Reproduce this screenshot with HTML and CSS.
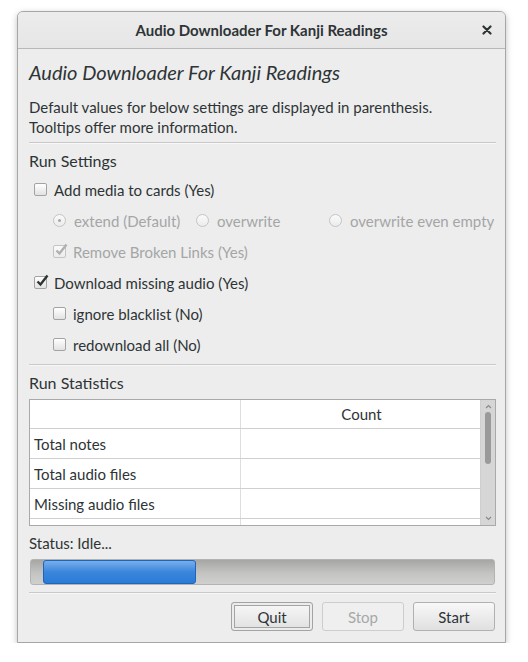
FILE: index.html
```html
<!DOCTYPE html>
<html>
<head>
<meta charset="utf-8">
<link rel="stylesheet" href="styles.css">
</head>
<body>
<div class="window">
  <div class="titlebar">
    <span class="title">Audio Downloader For Kanji Readings</span>
    <span class="close"><svg width="10" height="10" viewBox="0 0 10 10"><path d="M1.5 1.5 L8.5 8.5 M8.5 1.5 L1.5 8.5" stroke="#2e3436" stroke-width="2.2" stroke-linecap="round"/></svg></span>
  </div>
  <div class="content">
    <div class="heading">Audio Downloader For Kanji Readings</div>
    <div class="desc">Default values for below settings are displayed in parenthesis.<br>Tooltips offer more information.</div>
    <div class="sep sep-a"></div>
    <div class="section section-a">Run Settings</div>
    <div class="row"><span class="cb"></span><span>Add media to cards (Yes)</span></div>
    <div class="row indent disabled radios">
      <span class="opt opt1"><span class="radio on"></span><span>extend (Default)</span></span>
      <span class="opt opt2"><span class="radio"></span><span>overwrite</span></span>
      <span class="opt"><span class="radio"></span><span>overwrite even empty</span></span>
    </div>
    <div class="row indent disabled"><span class="cb checked plain"><svg width="16" height="16" viewBox="0 0 16 16"><path d="M3.5 8.5 L6.5 11.5 L13.5 2.5" fill="none" stroke="#b0b0b0" stroke-width="2.4"/></svg></span><span>Remove Broken Links (Yes)</span></div>
    <div class="row"><span class="cb checked"><svg width="16" height="16" viewBox="0 0 16 16"><path d="M3.5 8.5 L6.5 11.5 L13.5 2.5" fill="none" stroke="#2e3436" stroke-width="2.4"/></svg></span><span>Download missing audio (Yes)</span></div>
    <div class="row indent"><span class="cb"></span><span>ignore blacklist (No)</span></div>
    <div class="row indent"><span class="cb"></span><span>redownload all (No)</span></div>
    <div class="sep sep-b"></div>
    <div class="section section-b">Run Statistics</div>
    <div class="table">
      <div class="grid">
        <div class="tr head"><div class="c1"></div><div class="c2">Count</div></div>
        <div class="tr"><div class="c1">Total notes</div><div class="c2"></div></div>
        <div class="tr"><div class="c1">Total audio files</div><div class="c2"></div></div>
        <div class="tr"><div class="c1">Missing audio files</div><div class="c2"></div></div>
        <div class="tr last"><div class="c1"></div><div class="c2"></div></div>
      </div>
      <div class="scrollbar">
        <svg class="arrow" width="7" height="5" viewBox="0 0 7 5"><path d="M1 4 L3.5 1.5 L6 4" fill="none" stroke="#8a8a8a" stroke-width="1.2"/></svg>
        <div class="slider"></div>
        <div class="fill"></div>
        <svg class="arrow" width="7" height="5" viewBox="0 0 7 5"><path d="M1 1 L3.5 3.5 L6 1" fill="none" stroke="#8a8a8a" stroke-width="1.2"/></svg>
      </div>
    </div>
    <div class="status">Status: Idle...</div>
    <div class="progress"><div class="bar"></div></div>
    <div class="sep sep-c"></div>
    <div class="buttons">
      <button class="btn focus">Quit</button>
      <button class="btn off">Stop</button>
      <button class="btn">Start</button>
    </div>
  </div>
</div>
</body>
</html>
```

FILE: styles.css
```css
html, body {
  margin: 0;
  padding: 0;
  background: #ffffff;
}
body {
  font-family: "Lato", "Open Sans", sans-serif;
  font-size: 15px;
  color: #2e3436;
}
.window {
  margin: 11px 0 0 17px;
  width: 489px;
  height: 632px;
  box-sizing: border-box;
  border: 1px solid #a6a6a6;
  border-radius: 6px 6px 0 0;
  background: #ededed;
  box-shadow: 0 2px 6px rgba(0,0,0,0.25);
  display: flex;
  flex-direction: column;
  overflow: hidden;
}
.titlebar {
  height: 36px;
  border-bottom: 1px solid #b8b8b8;
  background: linear-gradient(#ececec, #e6e6e6);
  position: relative;
  display: flex;
  align-items: center;
  justify-content: center;
}
.title {
  font-weight: bold;
  font-size: 15px;
  color: #2e3436;
}
.close {
  position: absolute;
  right: 13px;
  top: 13px;
  width: 10px;
  height: 10px;
  display: flex;
}
.content {
  flex: 1;
  padding: 0 9px 0 11px;
  display: flex;
  flex-direction: column;
}
.heading {
  font-style: italic;
  font-size: 20px;
  height: 24px;
  line-height: 24px;
  margin-top: 11px;
}
.desc {
  margin-top: 13px;
  line-height: 20px;
}
.sep {
  height: 1px;
  background: #c9c9c9;
  border-bottom: 1px solid #f8f8f8;
}
.sep-a { margin-top: 5px; }
.section {
  font-size: 16px;
  height: 22px;
  line-height: 22px;
}
.section-a { margin-top: 6px; margin-bottom: 2px; }
.section-b { margin-top: 6px; }
.row {
  height: 31px;
  display: flex;
  align-items: center;
  gap: 7px;
  padding-left: 5px;
}
.row.indent { padding-left: 24px; }
.row.disabled { color: #a4a6a6; }
.radios { padding-left: 23px; gap: 0; }
.opt { display: flex; align-items: center; gap: 8px; }
.opt1 { width: 143px; }
.opt2 { width: 133px; }
.cb {
  width: 11px;
  height: 11px;
  border: 1px solid #a3a3a3;
  border-radius: 2px;
  background: linear-gradient(#ffffff, #e2e2e2);
  position: relative;
  flex: none;
}
.cb.checked svg {
  position: absolute;
  left: -1px;
  top: -4px;
}
.cb.plain {
  border-color: #c4c4c4;
  background: linear-gradient(#fafafa, #ececec);
}
.radio {
  width: 11px;
  height: 11px;
  border: 1px solid #c4c4c4;
  border-radius: 50%;
  background: linear-gradient(#fafafa, #ececec);
  position: relative;
  flex: none;
}
.radio.on::after {
  content: "";
  position: absolute;
  left: 4px;
  top: 4px;
  width: 3px;
  height: 3px;
  border-radius: 50%;
  background: #a8a8a8;
}
.sep-b { margin-top: 4px; }
.table {
  margin-top: 5px;
  height: 127px;
  box-sizing: border-box;
  border: 1px solid #a9a9a9;
  background: #ffffff;
  display: flex;
  overflow: hidden;
}
.grid {
  flex: 1;
  display: flex;
  flex-direction: column;
}
.tr {
  display: flex;
  height: 29px;
  border-bottom: 1px solid #cfcfcf;
  flex: none;
}
.tr.head { height: 28px; }
.tr.last { border-bottom: none; }
.c1 {
  width: 211px;
  border-right: 1px solid #dedede;
  display: flex;
  align-items: center;
  padding-left: 4px;
  box-sizing: border-box;
}
.c2 {
  flex: 1;
  display: flex;
  align-items: center;
  justify-content: center;
  padding-left: 2px;
}
.scrollbar {
  width: 14px;
  background: #d6d6d6;
  border-left: 1px solid #cfcfcf;
  display: flex;
  flex-direction: column;
  align-items: center;
}
.arrow { margin-top: 4px; flex: none; }
.slider {
  margin-top: 3px;
  width: 6px;
  height: 52px;
  border-radius: 3px;
  background: #9a9a9a;
}
.fill { flex: 1; }
.scrollbar .arrow:last-child { margin: 0 0 4px 0; }
.status {
  margin-top: 7px;
  height: 20px;
  line-height: 20px;
}
.progress {
  margin-top: 6px;
  margin-left: 1px;
  margin-right: 1px;
  height: 26px;
  box-sizing: border-box;
  border: 1px solid #b3b3b3;
  border-radius: 3px;
  background: linear-gradient(#a6a6a4, #c4c4c2 55%, #cfcfcd);
  padding: 0 0 0 12px;
  display: flex;
}
.bar {
  width: 153px;
  height: 24px;
  box-sizing: border-box;
  border: 1px solid #1c64bd;
  border-radius: 3px;
  background: linear-gradient(#78aeea, #3a86dc 50%, #2a7bd6);
}
.sep-c { margin-top: 7px; }
.buttons {
  margin-top: 8px;
  display: flex;
  justify-content: flex-end;
  gap: 9px;
  padding-right: 1px;
}
.btn {
  width: 82px;
  height: 29px;
  box-sizing: border-box;
  border: 1px solid #b1b1b1;
  border-radius: 3px;
  background: linear-gradient(#f8f8f8, #e0e0e0);
  font-family: "Lato", "Open Sans", sans-serif;
  font-size: 15px;
  color: #2e3436;
  padding: 0;
}
.btn.focus {
  box-shadow: inset 0 0 0 2px #ececec, inset 0 0 0 3px #a4a4a4;
  border-color: #a4a4a4;
}
.btn.off {
  color: #a6a8a8;
  border-color: #cdcdcd;
  background: #efefef;
}
```
